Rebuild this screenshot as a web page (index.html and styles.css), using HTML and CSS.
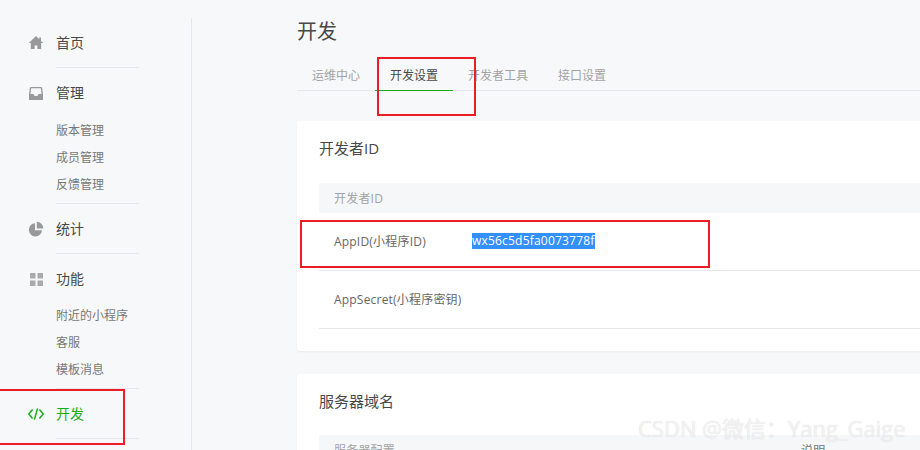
FILE: index.html
```html
<!DOCTYPE html>
<html lang="zh-CN">
<head>
  <meta charset="UTF-8" />
  <title>开发设置</title>
  <link rel="stylesheet" href="styles.css">
</head>
<body>
  <div class="layout">
    <aside class="sidebar">
      <div class="nav-group">
        <div class="nav-title">
          <svg class="nav-icon" viewBox="0 0 16 16"><path d="M8 1 0.8 8 H2.8 V14 H6.6 V10.5 H9.4 V14 H13.2 V8 H15.2 L13 5.9 V2.5 H11.2 V4.2 Z" /></svg>
          首页
        </div>
      </div>
      <div class="nav-group">
        <div class="nav-title">
          <svg class="nav-icon" viewBox="0 0 16 16"><path fill-rule="evenodd" d="M3 2 H13 Q14 2 14.2 3 L15 9 V14.4 Q15 15 14.4 15 H1.6 Q1 15 1 14.4 V9 L1.8 3 Q2 2 3 2 Z M3.2 3.2 2.4 9 H5.5 L6.5 11 H9.5 L10.5 9 H13.6 L12.8 3.2 Z" /></svg>
          管理
        </div>
        <ul class="sub-list">
          <li>版本管理</li>
          <li>成员管理</li>
          <li>反馈管理</li>
        </ul>
      </div>
      <div class="nav-group">
        <div class="nav-title">
          <svg class="nav-icon" viewBox="0 0 16 16"><path d="M7 2.2 A6.6 6.6 0 1 0 14 9.2 H7 Z M8.8 0.8 V7.4 H15.3 A6.6 6.6 0 0 0 8.8 0.8 Z" /></svg>
          统计
        </div>
      </div>
      <div class="nav-group">
        <div class="nav-title">
          <svg class="nav-icon grid-icon" viewBox="0 0 16 16"><path d="M2 2 H7.5 V7.5 H2 Z M9.5 2 H15 V7.5 H9.5 Z M2 9.5 H7.5 V15 H2 Z M9.5 9.5 H15 V15 H9.5 Z" /></svg>
          功能
        </div>
        <ul class="sub-list">
          <li>附近的小程序</li>
          <li>客服</li>
          <li>模板消息</li>
        </ul>
      </div>
      <div class="nav-group active">
        <div class="nav-title">
          <svg class="nav-icon code-icon" viewBox="0 0 16 16"><path d="M4.6 3.6 0.8 8 4.6 12.4 M11.4 3.6 15.2 8 11.4 12.4 M9.6 2.4 6.4 13.6" /></svg>
          开发
        </div>
      </div>
    </aside>

    <main class="content">
      <h1 class="page-title">开发</h1>
      <div class="tabs">
        <a class="tab">运维中心</a>
        <a class="tab current">开发设置</a>
        <a class="tab">开发者工具</a>
        <a class="tab">接口设置</a>
      </div>

      <section class="card">
        <h2 class="card-title">开发者ID</h2>
        <div class="table-head">开发者ID</div>
        <div class="row">
          <span class="row-label">AppID(小程序ID)</span>
          <span class="selected">wx56c5d5fa0073778f</span>
        </div>
        <div class="row">
          <span class="row-label">AppSecret(小程序密钥)</span>
        </div>
      </section>

      <section class="card">
        <h2 class="card-title">服务器域名</h2>
        <div class="table-head split">
          <span class="head-main">服务器配置</span>
          <span>说明</span>
        </div>
      </section>
    </main>
  </div>

  <div class="mark mark-tab"></div>
  <div class="mark mark-row"></div>
  <div class="mark mark-nav"></div>
  <div class="watermark">CSDN @微信：Yang_Gaige</div>
</body>
</html>
```

FILE: styles.css
```css
html, body {
  height: 100%;
}
body {
  margin: 0;
  background: #f7f8fa;
  color: #484848;
  font-family: "Open Sans", "Noto Sans CJK SC", sans-serif;
  font-size: 12px;
  overflow: hidden;
  position: relative;
}
.layout {
  display: flex;
  height: 450px;
}

/* sidebar */
.sidebar {
  width: 163px;
  height: 432px;
  margin-top: 18px;
  flex-shrink: 0;
  border-right: 1px solid #e7e7eb;
  padding-left: 28px;
}
.nav-group {
  width: 111px;
  padding-top: 14px;
}
.nav-group::after {
  content: "";
  display: block;
  height: 1px;
  margin-left: 28px;
  background: #e7e7eb;
}
.nav-title {
  display: flex;
  align-items: center;
  gap: 12px;
  height: 22px;
  margin-bottom: 13px;
  font-size: 14px;
  line-height: 22px;
}
.nav-icon {
  width: 16px;
  height: 16px;
  fill: #999;
  flex-shrink: 0;
}
.grid-icon {
  fill: #aaa;
}
.code-icon {
  fill: none;
  stroke: #1aad19;
  stroke-width: 1.5;
}
.sub-list {
  list-style: none;
  margin: -0.5px 0 5px 28px;
  padding: 0;
  color: #777;
}
.sub-list li {
  height: 27px;
  line-height: 27px;
  white-space: nowrap;
}
.active .nav-title {
  color: #1aad19;
}

/* main column */
.content {
  flex: none;
  width: 800px;
  margin-left: 105px;
  padding-top: 18px;
}
.page-title {
  margin: 0;
  font-size: 20px;
  font-weight: 400;
  line-height: 28px;
}
.tabs {
  display: flex;
  margin-top: 14px;
  border-bottom: 1px solid #e7e7eb;
  height: 30px;
}
.tab {
  padding: 0 15px;
  height: 30px;
  line-height: 32px;
  color: #a3a3a3;
  white-space: nowrap;
}
.tab.current {
  color: #484848;
  border-bottom: 1px solid #1aad19;
}
.card {
  margin-top: 23px;
  padding: 17px 22px 22px;
  background: #fff;
  border-radius: 3px;
  box-shadow: 0 1px 2px rgba(0, 0, 0, 0.05);
}
.tabs + .card {
  margin-top: 30px;
}
.card-title {
  margin: 0 0 24.5px;
  font-size: 15px;
  font-weight: 400;
  line-height: 20px;
}
.table-head {
  height: 30px;
  line-height: 32px;
  padding-left: 15px;
  background: #f6f7f9;
  color: #a3a3a3;
  letter-spacing: 0.2px;
}
.split {
  display: flex;
  color: #777;
}
.head-main {
  width: 467px;
  color: #a3a3a3;
}
.row {
  display: flex;
  align-items: center;
  height: 57px;
  padding-left: 15px;
  border-bottom: 1px solid #e7e7eb;
  color: #666;
  letter-spacing: 0.2px;
}
.row-label {
  width: 138px;
  white-space: nowrap;
}
.selected {
  background: #3390ff;
  color: #fff;
  line-height: 16px;
}

/* red boxes drawn on the screenshot */
.mark {
  position: absolute;
  box-sizing: border-box;
  border: 2px solid #ee1c25;
}
.mark-tab {
  left: 377px;
  top: 57px;
  width: 99px;
  height: 59px;
}
.mark-row {
  left: 300px;
  top: 220px;
  width: 410px;
  height: 48px;
}
.mark-nav {
  left: -4px;
  top: 389px;
  width: 129px;
  height: 56px;
}
.watermark {
  position: absolute;
  left: 638px;
  top: 413px;
  font-size: 22px;
  line-height: 30px;
  white-space: nowrap;
  color: rgba(255, 255, 255, 0.7);
  text-shadow: 0 0 1px rgba(110, 110, 110, 0.32);
}
```
